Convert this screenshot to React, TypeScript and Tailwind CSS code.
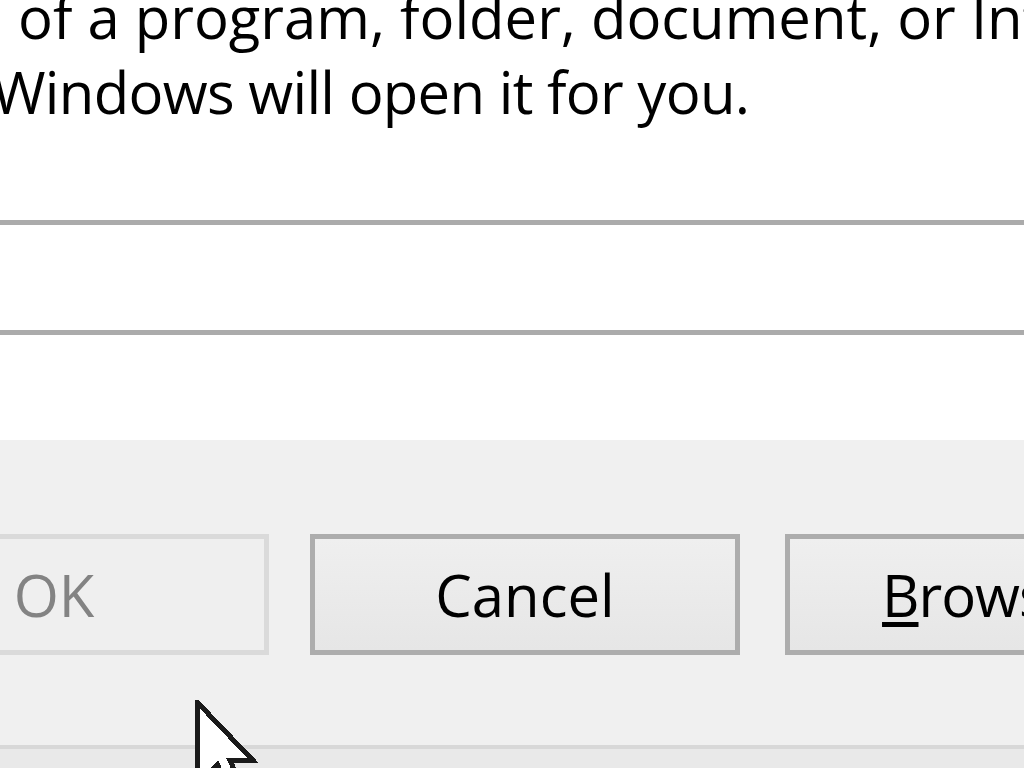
export default function App() {
  return (
    <div className="relative w-[1024px] h-[768px] overflow-hidden bg-white text-black font-['Open_Sans','Noto_Sans',sans-serif] text-[58px]">
      {/* description text */}
      <div className="h-[220px] flex flex-col whitespace-nowrap leading-[75px]">
        <div className="-mt-[21px] ml-[18px]">of a program, folder, document, or Internet</div>
        <div className="-ml-[8px] tracking-[-0.7px]">Windows will open it for you.</div>
      </div>

      {/* Open: input field */}
      <div className="h-[115px] border-y-[5px] border-[#ababab] bg-white" />

      <div className="h-[105px] bg-white" />

      {/* footer */}
      <div className="h-[305px] bg-[#f0f0f0] pt-[94px]">
        <div className="flex -ml-[161px]">
          <button className="w-[430px] h-[121px] shrink-0 border-[5px] border-[#dadada] bg-[#efefef] text-[#838383]">
            OK
          </button>
          <button className="ml-[41px] w-[430px] h-[121px] shrink-0 border-[5px] border-[#adadad] bg-gradient-to-b from-[#efefef] to-[#e6e6e6]">
            Cancel
          </button>
          <button className="ml-[45px] w-[430px] h-[121px] shrink-0 border-[5px] border-[#adadad] bg-gradient-to-b from-[#efefef] to-[#e6e6e6] pl-[2px] tracking-[-1px]">
            <span className="underline decoration-[5px] underline-offset-[5px]">B</span>rowse...
          </button>
        </div>
      </div>
      <div className="h-[4px] bg-[#d8d8d8]" />
      <div className="h-[40px] bg-[#e9e9e9]" />

      {/* mouse pointer */}
      <svg
        className="absolute left-[195px] top-[700px]"
        width="64"
        height="100"
        viewBox="0 0 12.8 20"
        shapeRendering="crispEdges"
      >
        <path
          d="M0.5 0.5 L0.5 17 L4.5 13 L7.5 19.2 L9.8 18.2 L7 12.1 L11.6 12.1 Z"
          fill="#ffffff"
          stroke="#1a1a1a"
          strokeWidth="1"
          strokeLinejoin="miter"
        />
      </svg>
    </div>
  );
}
